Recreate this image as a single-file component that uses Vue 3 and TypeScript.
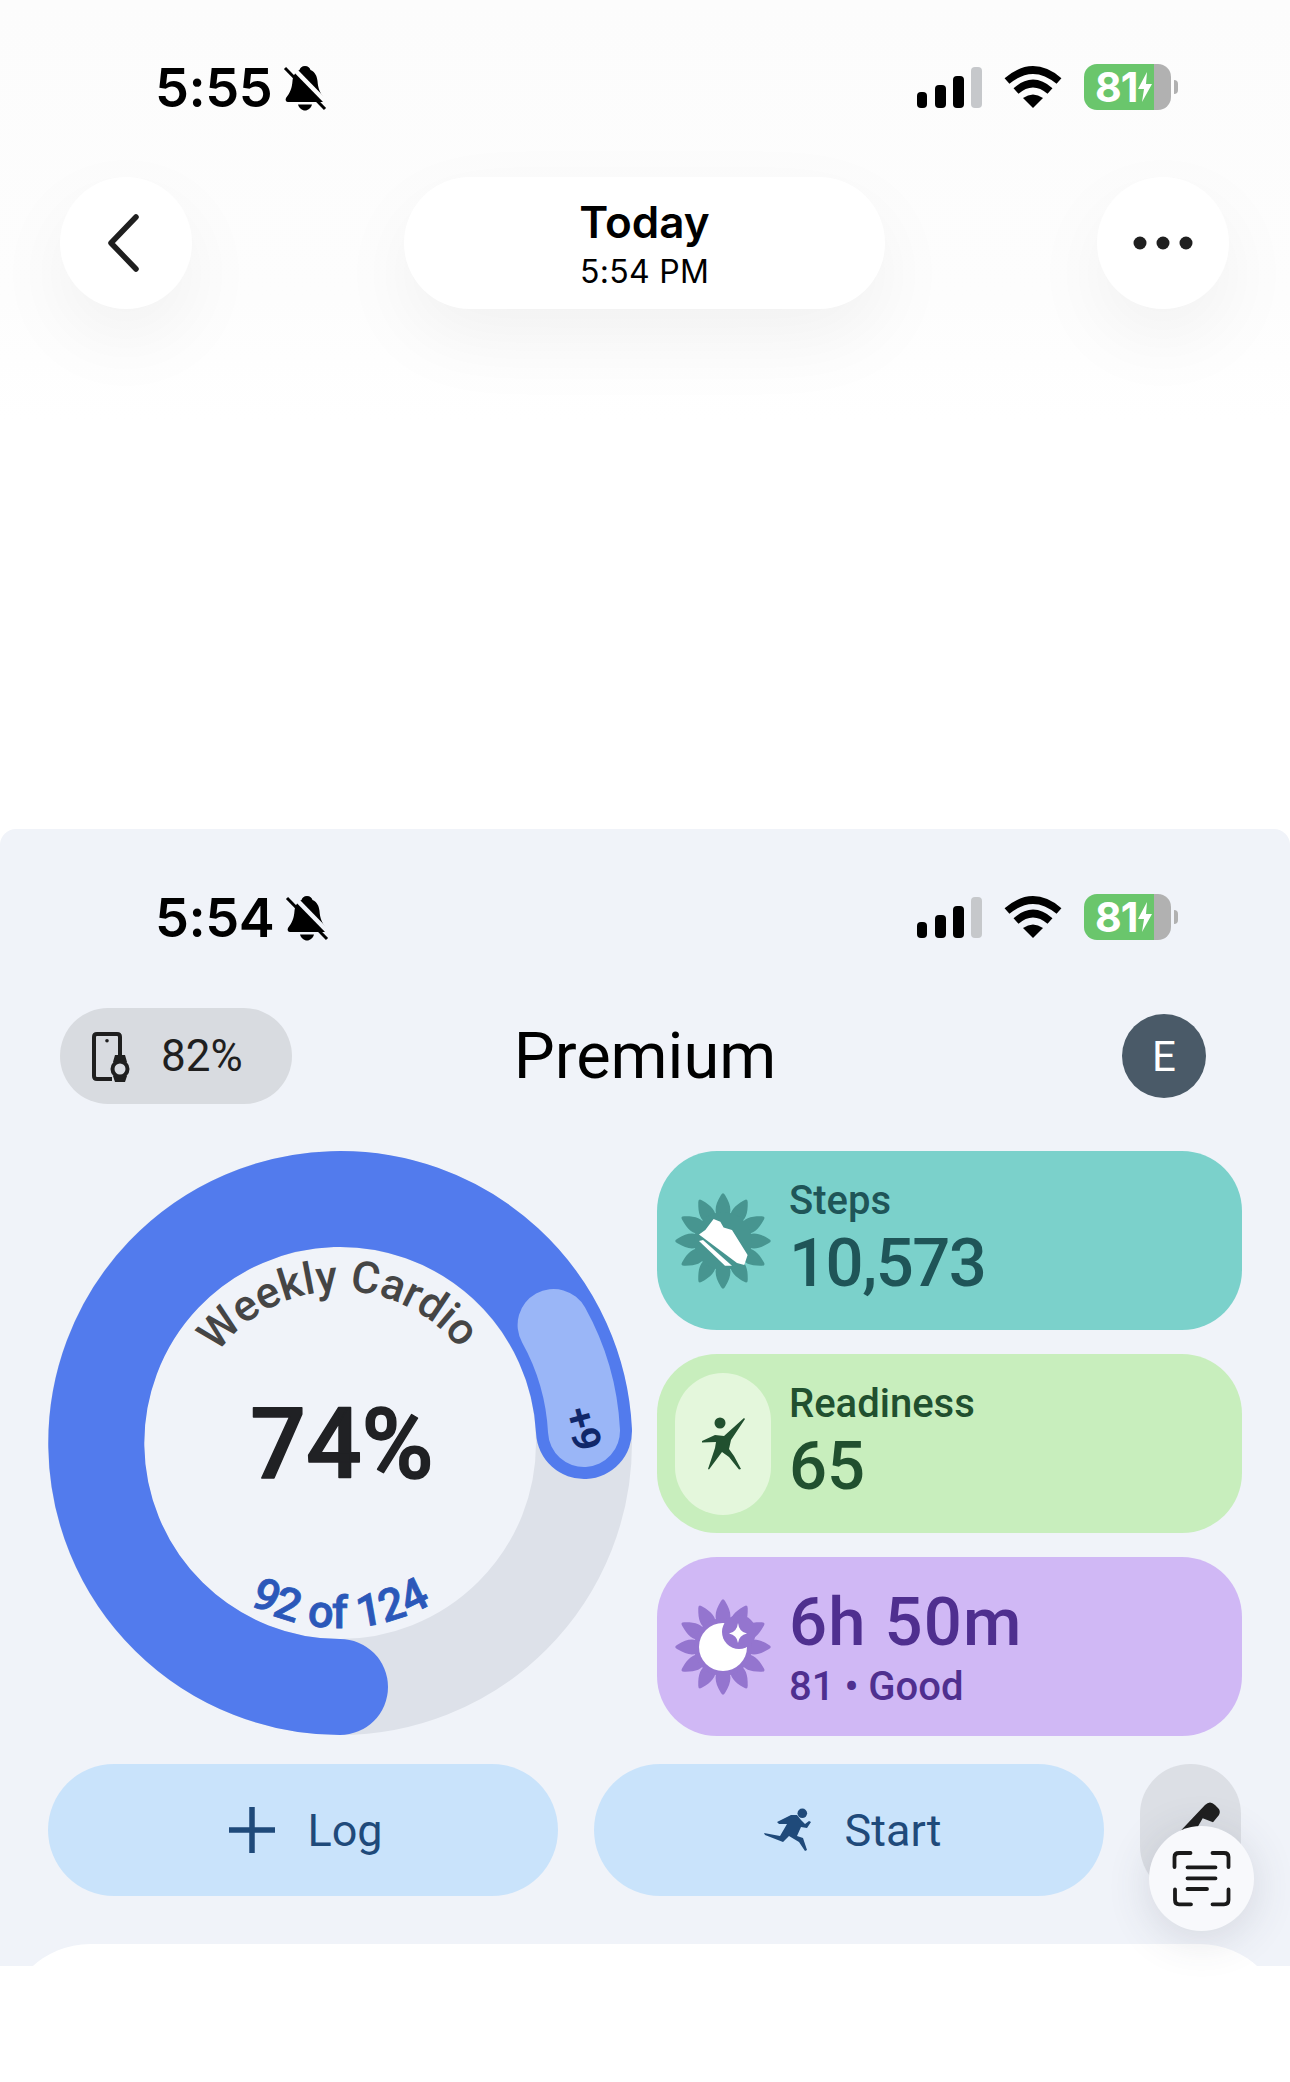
<template>
  <div class="page">
    <!-- shared glyphs -->
    <svg class="defs" width="0" height="0" aria-hidden="true">
      <defs>
        <mask id="bellCut" maskUnits="userSpaceOnUse" x="0" y="0" width="42" height="46">
          <rect width="42" height="46" fill="#fff" />
          <path d="M5 -1 L46 41" stroke="#000" stroke-width="4.500" />
        </mask>
        <symbol id="bell" viewBox="0 0 42 46">
          <g mask="url(#bellCut)">
            <path d="M21 1C24 1 26 3 26.500 5C31 7 33 11 33.500 16C34 23 36 28 40 33C41 35 40 37 38 37H4C2 37 1 35 2 33C6 28 8 23 8.500 16C9 11 11 7 15.500 5C16 3 18 1 21 1Z" />
            <path d="M14 39.500H28C27 43 24 45.500 21 45.500C18 45.500 15 43 14 39.500Z" />
          </g>
          <path d="M1 3 L41 44" stroke="currentColor" stroke-width="3" fill="none" />
        </symbol>
        <symbol id="signal" viewBox="0 0 65 41">
          <rect x="0" y="25" width="10" height="16" rx="4" />
          <rect x="18" y="18" width="11" height="23" rx="4" />
          <rect x="36" y="9" width="11" height="32" rx="4" />
          <rect x="54" y="0" width="11" height="41" rx="4" fill="#c6c8cb" />
        </symbol>
        <symbol id="wifi" viewBox="0 0 58 42">
          <path d="M3 15Q29 -7 55 15" fill="none" stroke="currentColor" stroke-width="7.500" />
          <path d="M12 25Q29 10 46 25" fill="none" stroke="currentColor" stroke-width="7.500" />
          <path d="M19 32Q29 25 39 32L29 42Z" />
        </symbol>
        <symbol id="flower" viewBox="-48 -48 96 96">
          <path
            v-for="a in petals"
            :key="a"
            d="M-2 -46Q0 -49.500 2 -46C8 -36 9 -30 5 -22L-5 -22C-9 -30 -8 -36 -2 -46Z"
            :transform="`rotate(${a})`"
          />
          <circle r="29" />
        </symbol>
      </defs>
    </svg>

    <section class="top">
      <div class="status">
        <div class="status-left">
          <span class="clock">5:55</span>
          <svg class="bell"><use href="#bell" /></svg>
        </div>
        <div class="status-right">
          <svg class="signal"><use href="#signal" /></svg>
          <svg class="wifi"><use href="#wifi" /></svg>
          <div class="battery">
            <div class="battery-body">
              <span>81</span>
              <svg class="bolt" viewBox="0 0 14 30"><path d="M9 0L0 17H6L4 30L14 12H8Z" /></svg>
            </div>
            <i class="battery-nub" />
          </div>
        </div>
      </div>

      <nav class="nav">
        <button class="round" aria-label="Back">
          <svg class="chevron" viewBox="0 0 32 58"><path d="M29 3L4 29L29 55" /></svg>
        </button>
        <div class="title-pill">
          <strong>Today</strong>
          <span>5:54 PM</span>
        </div>
        <button class="round" aria-label="More">
          <svg class="dots" viewBox="0 0 60 14">
            <circle cx="7" cy="7" r="6.500" />
            <circle cx="30" cy="7" r="6.500" />
            <circle cx="53" cy="7" r="6.500" />
          </svg>
        </button>
      </nav>
    </section>

    <section class="panel">
      <div class="status">
        <div class="status-left">
          <span class="clock">5:54</span>
          <svg class="bell"><use href="#bell" /></svg>
        </div>
        <div class="status-right">
          <svg class="signal"><use href="#signal" /></svg>
          <svg class="wifi"><use href="#wifi" /></svg>
          <div class="battery">
            <div class="battery-body">
              <span>81</span>
              <svg class="bolt" viewBox="0 0 14 30"><path d="M9 0L0 17H6L4 30L14 12H8Z" /></svg>
            </div>
            <i class="battery-nub" />
          </div>
        </div>
      </div>

      <header class="head">
        <div class="chip">
          <svg class="chip-icon" viewBox="0 0 44 50">
            <path d="M30 24V5Q30 2 27 2H7Q4 2 4 5V44Q4 47 7 47H22" fill="none" stroke="#1f1f1f" stroke-width="4" />
            <circle cx="17" cy="8.700" r="1.800" fill="#1f1f1f" />
            <path d="M25 23H35L37 30H23ZM23 44H37L35 50H25Z" fill="#1f1f1f" />
            <circle cx="30" cy="37" r="7.500" fill="none" stroke="#1f1f1f" stroke-width="4" />
          </svg>
          <span>82%</span>
        </div>
        <h1>Premium</h1>
        <div class="avatar">E</div>
      </header>

      <div class="main">
        <svg class="ring" viewBox="0 0 585 586">
          <defs>
            <path id="arcTop" d="M140 293A152 152 0 0 1 444 293" />
            <path id="arcBottom" d="M107 293A185 185 0 0 0 477 293" />
          </defs>
          <circle cx="292" cy="293" r="244" fill="none" stroke="#dde1e9" stroke-width="96" />
          <path d="M536 281A244 244 0 1 0 292 537" fill="none" stroke="#527bed" stroke-width="96" stroke-linecap="round" />
          <path d="M505.600 175A244 244 0 0 1 536 281" fill="none" stroke="#9ab6f7" stroke-width="72" stroke-linecap="round" />
          <text class="ring-label">
            <textPath href="#arcTop" startOffset="49.500%" text-anchor="middle">Weekly Cardio</textPath>
          </text>
          <text class="ring-count">
            <textPath href="#arcBottom" startOffset="50%" text-anchor="middle">92 of 124</textPath>
          </text>
          <text class="ring-value" x="294" y="328" text-anchor="middle">74%</text>
          <text class="ring-extra" transform="translate(535 279) rotate(75)" text-anchor="middle" dominant-baseline="central">+9</text>
        </svg>

        <div class="cards">
          <div class="card steps">
            <svg class="badge"><use href="#flower" /></svg>
            <svg class="badge-art" viewBox="-48 -48 96 96">
              <path d="M-24 -6.500L-17.700 -11L-9.400 -22L-2.700 -19.300L.6 -13.600L9 -11L24.600 14L21.300 24L14 22Z" fill="#fff" />
              <path d="M-24 0L-20 -1L9 24.700H2Z" fill="#fff" />
            </svg>
            <div class="card-text">
              <span class="label">Steps</span>
              <span class="value">10,573</span>
            </div>
          </div>
          <div class="card ready">
            <div class="ready-pill">
              <svg class="person" viewBox="0 0 46 58">
                <circle cx="20" cy="8" r="5.500" />
                <path d="M2 26L15 20L24 21L44 3L45 4L31 25L29 34L34 41L41 54L39 54.500L29 42L22 37L9 54.500L8 54L15 33L16 27L2 27.500Z" />
              </svg>
            </div>
            <div class="card-text">
              <span class="label">Readiness</span>
              <span class="value">65</span>
            </div>
          </div>
          <div class="card sleep">
            <svg class="badge"><use href="#flower" /></svg>
            <svg class="badge-art" viewBox="-48 -48 96 96">
              <circle r="24" fill="#fff" />
              <circle cx="16" cy="-15" r="17" fill="#9475cf" />
              <path d="M15 -24Q16 -15 24 -13.500Q16 -12 15 -4Q14 -12 6 -13.500Q14 -15 15 -24Z" fill="#fff" />
            </svg>
            <div class="card-text">
              <span class="value">6h 50m</span>
              <span class="label">81 • Good</span>
            </div>
          </div>
        </div>
      </div>

      <div class="actions">
        <button class="action">
          <svg class="plus" viewBox="0 0 46 46"><path d="M23 0V46M0 23H46" /></svg>
          <span>Log</span>
        </button>
        <button class="action">
          <svg class="runner" viewBox="14 8 50 44">
            <circle cx="53.300" cy="13.300" r="4.800" />
            <path d="M28 22L42 15L48 15L52 20L56 24L60 21L62 22L58 28L52 27L48 36L54 38L58 50L56 51L50 42L40 36L34 42L16 35L15 33L31 36L38 24L30 24Z" />
          </svg>
          <span>Start</span>
        </button>
        <button class="edit" aria-label="Edit">
          <svg class="pencil" viewBox="0 0 101 132">
            <path d="M30 78L65 41Q70 36 75 41L78 44Q81 47 79 51L73 58.300L62.700 54.300L45 85Z" />
          </svg>
        </button>
      </div>

      <div class="sheet" />
    </section>

    <button class="fab" aria-label="Scan">
      <svg viewBox="0 0 105 105">
        <path d="M25.500 41V31Q25.500 27 30 27H41.500M63.500 27H75Q79.500 27 79.500 31V41M26 63.500V74Q26 78.300 30 78.300H42M63.500 78.300H75Q79.500 78.300 79.500 74V63.500" />
        <path d="M38.500 41.300H66.500M38.500 52.300H66.500M38.500 63H58" />
      </svg>
    </button>
  </div>
</template>

<script setup lang="ts">
// 12 petals for the badge flower
const petals: number[] = Array.from({ length: 12 }, (_, i) => i * 30)
</script>

<style>
html,
body {
  margin: 0;
  background: #fff;
}
</style>

<style scoped>
.page {
  position: relative;
  width: 1290px;
  height: 2082px;
  overflow: hidden;
  background: #fff;
  font-family: Roboto, "Noto Sans", sans-serif;
  color: #1f1f1f;
}

button {
  border: none;
  padding: 0;
  font: inherit;
  color: inherit;
}

.defs {
  position: absolute;
}

.top {
  height: 829px;
  padding-top: 65px;
  box-sizing: border-box;
  background: linear-gradient(#fcfcfc 0, #fdfdfd 300px, #fff 420px);
}

.status {
  display: flex;
  justify-content: space-between;
  align-items: center;
  height: 46px;
  padding: 0 112px 0 155px;
  color: #000;
  fill: #000;
}

.status-left,
.status-right {
  display: flex;
  align-items: center;
}

.status-right {
  margin-top: -3px;
}

.clock {
  font-family: Inter, sans-serif;
  font-weight: 600;
  font-size: 54px;
  line-height: 46px;
  letter-spacing: -0.5px;
}

.bell {
  width: 44px;
  height: 46px;
  margin-left: 11px;
}

.signal {
  width: 65px;
  height: 41px;
  margin-top: 2px;
}

.wifi {
  width: 58px;
  height: 42px;
  margin: 0 22px;
}

.battery {
  display: flex;
  align-items: center;
  gap: 3px;
}

.battery-body {
  display: flex;
  align-items: center;
  gap: 1px;
  box-sizing: border-box;
  width: 87px;
  height: 46px;
  padding-left: 11px;
  border-radius: 13px;
  background: linear-gradient(90deg, #6ac66c 80%, #b1b1b1 80%);
  font-family: Inter, sans-serif;
  font-weight: 700;
  font-size: 41px;
  letter-spacing: -1px;
  color: #fff;
}

.bolt {
  width: 14px;
  height: 30px;
  fill: #fff;
}

.battery-nub {
  width: 4px;
  height: 14px;
  border-radius: 0 4px 4px 0;
  background: #b1b1b1;
}

.nav {
  display: flex;
  justify-content: space-between;
  margin-top: 66px;
  padding: 0 61px 0 60px;
}

.round,
.title-pill {
  display: flex;
  align-items: center;
  justify-content: center;
  height: 132px;
  border-radius: 66px;
  background: #fff;
  box-shadow: 0 30px 80px rgba(0, 0, 0, 0.05);
}

.round {
  width: 132px;
}

.chevron {
  width: 32px;
  height: 58px;
  margin-right: 6px;
  fill: none;
  stroke: #1f1f1f;
  stroke-width: 5.500;
  stroke-linecap: round;
  stroke-linejoin: round;
}

.dots {
  width: 60px;
  height: 14px;
  fill: #1f1f1f;
}

.title-pill {
  flex-direction: column;
  box-sizing: border-box;
  width: 481px;
  padding-top: 2px;
  font-family: Inter, sans-serif;
  color: #000;
}

.title-pill strong {
  font-weight: 600;
  font-size: 44px;
  line-height: 52px;
}

.title-pill span {
  margin-top: 4px;
  font-size: 32px;
  line-height: 40px;
  letter-spacing: 0.3px;
}

.panel {
  height: 1137px;
  padding-top: 66px;
  box-sizing: border-box;
  overflow: hidden;
  border-radius: 16px 16px 0 0;
  background: #f0f3f9;
}

.head {
  display: grid;
  grid-template-columns: 1fr auto 1fr;
  align-items: center;
  margin-top: 67px;
  padding: 0 84px 0 60px;
}

.chip {
  display: flex;
  align-items: center;
  gap: 27px;
  justify-self: start;
  box-sizing: border-box;
  width: 232px;
  height: 96px;
  padding-left: 30px;
  border-radius: 48px;
  background: #d8dbe0;
  font-size: 44px;
}

.chip-icon {
  width: 44px;
  height: 50px;
  margin-top: 2px;
}

.head h1 {
  position: relative;
  left: 12px;
  margin: 0;
  font-weight: 400;
  font-size: 65px;
  color: #000;
}

.avatar {
  justify-self: end;
  display: flex;
  align-items: center;
  justify-content: center;
  width: 84px;
  height: 84px;
  border-radius: 50%;
  background: #4a5a68;
  font-size: 42px;
  color: #fff;
}

.main {
  display: flex;
  gap: 24px;
  margin-top: 46px;
  padding-left: 48px;
}

.ring {
  flex: none;
  width: 585px;
  height: 586px;
}

.ring-label {
  font-size: 44px;
  font-weight: 500;
  fill: #454545;
}

.ring-count {
  font-size: 45px;
  font-weight: 500;
  fill: #2b58b9;
  stroke: #2b58b9;
  stroke-width: 0.800;
}

.ring-value {
  font-size: 98px;
  font-weight: 500;
  fill: #202124;
  stroke: #202124;
  stroke-width: 1.500;
  stroke-linejoin: round;
}

.ring-extra {
  font-size: 39px;
  font-weight: 700;
  fill: #10276a;
}

.cards {
  display: grid;
  grid-template-rows: repeat(3, 1fr);
  gap: 24px;
  width: 585px;
  padding-top: 1px;
  box-sizing: border-box;
}

.card {
  position: relative;
  display: flex;
  align-items: center;
  gap: 18px;
  padding-left: 18px;
  border-radius: 60px;
}

.steps {
  background: #7bd1cb;
  fill: #479590;
  color: #1f5558;
}

.ready {
  background: #c8eebd;
  fill: #21502f;
  color: #21502f;
}

.sleep {
  background: #d0b8f5;
  fill: #9475cf;
  color: #4f2f8f;
}

.badge {
  flex: none;
  width: 96px;
  height: 96px;
}

/* white art on top of the flower */
.badge-art {
  position: absolute;
  left: 18px;
  top: 50%;
  width: 96px;
  height: 96px;
  margin-top: -48px;
}

.ready-pill {
  flex: none;
  display: flex;
  align-items: center;
  justify-content: center;
  width: 96px;
  height: 142px;
  border-radius: 48px;
  background: #e4f7dc;
}

.person {
  width: 46px;
  height: 58px;
}

.card-text {
  display: flex;
  flex-direction: column;
  padding-bottom: 6px;
}

.label {
  margin-bottom: 2px;
  font-size: 40px;
  line-height: 48px;
  font-weight: 500;
}

.value {
  font-size: 67px;
  line-height: 72px;
  font-weight: 500;
}

.steps .value {
  letter-spacing: -1.500px;
}

.sleep .card-text {
  padding: 4px 0 0;
}

.sleep .label {
  margin: 5px 0 0;
}

.sleep .value {
  letter-spacing: 1.200px;
}

.actions {
  display: flex;
  gap: 36px;
  margin-top: 28px;
  padding-left: 48px;
}

.action {
  display: flex;
  align-items: center;
  justify-content: center;
  gap: 32px;
  box-sizing: border-box;
  width: 510px;
  height: 132px;
  padding-left: 6px;
  border-radius: 66px;
  background: #c9e3fb;
  font-size: 45px;
  color: #1f4a7a;
}

.plus {
  width: 46px;
  height: 46px;
  fill: none;
  stroke: #1f4a7a;
  stroke-width: 5.500;
}

.runner {
  width: 50px;
  height: 44px;
  fill: #1f4a7a;
}

.edit {
  width: 101px;
  height: 132px;
  border-radius: 50px;
  background: #dcdfe5;
}

.pencil {
  display: block;
  width: 101px;
  height: 132px;
  fill: #1f1f1f;
}

.sheet {
  height: 200px;
  margin: 48px 5px 0;
  border-radius: 85px 85px 0 0;
  background: #fff;
}

.fab {
  position: absolute;
  left: 1149px;
  top: 1826px;
  width: 105px;
  height: 105px;
  border-radius: 50%;
  background: #f8f9fc;
  box-shadow: 0 8px 44px rgba(60, 70, 90, 0.16);
}

.fab svg {
  display: block;
  width: 105px;
  height: 105px;
  fill: none;
  stroke: #1a1a1a;
  stroke-width: 3.800;
  stroke-linecap: round;
}
</style>
